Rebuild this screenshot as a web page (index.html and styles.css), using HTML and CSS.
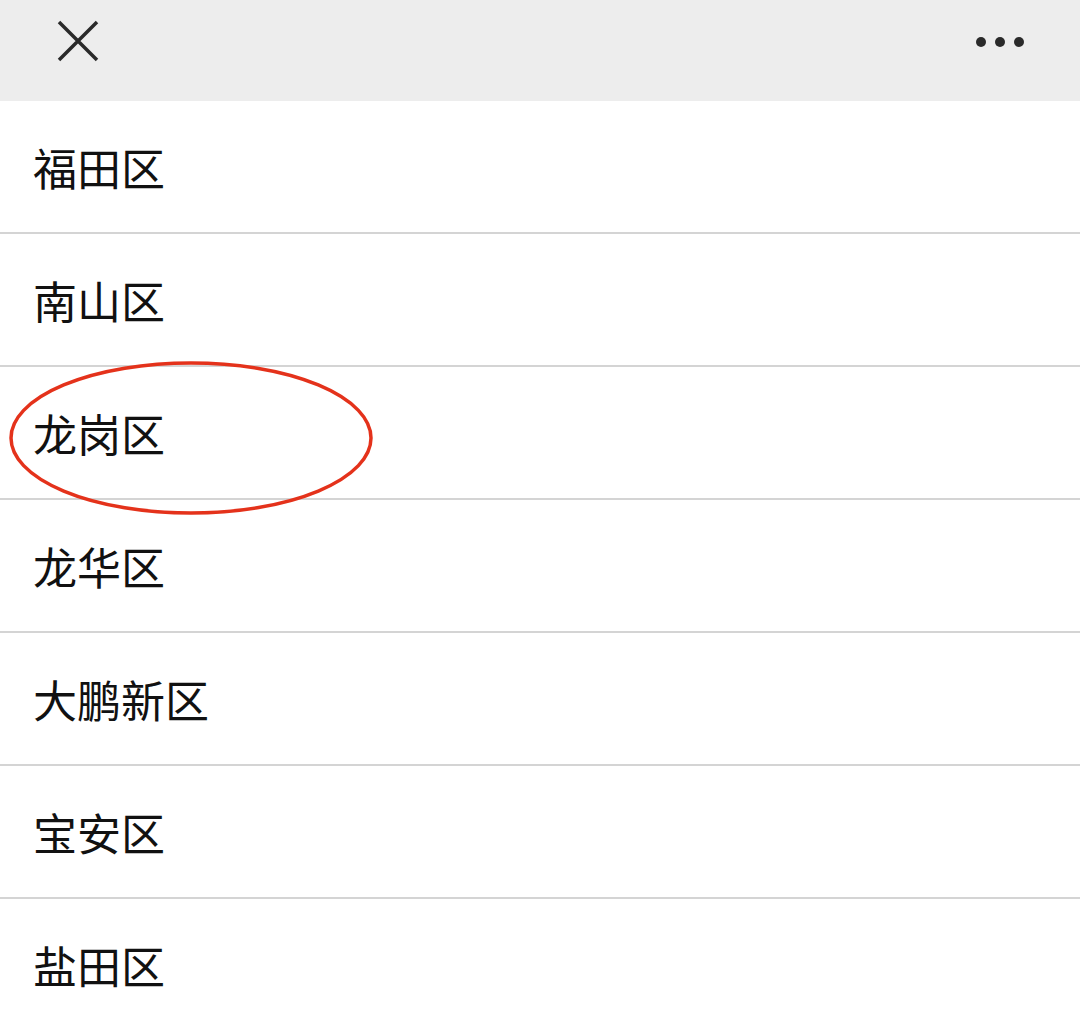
FILE: index.html
```html
<!DOCTYPE html>
<html lang="zh-CN">
<head>
  <meta charset="UTF-8" />
  <meta name="viewport" content="width=device-width, initial-scale=1.0" />
  <title>选择区域</title>
  <link rel="stylesheet" href="styles.css">
</head>
<body>
  <div class="topbar">
    <svg class="close-icon" width="42" height="42" viewBox="0 0 42 42">
      <path d="M2 2 L40 40 M40 2 L2 40" stroke="#2a2a2a" stroke-width="3.5" fill="none" />
    </svg>
    <svg class="more-icon" width="52" height="12" viewBox="0 0 52 12">
      <circle cx="6" cy="6" r="5" fill="#2a2a2a" />
      <circle cx="25" cy="6" r="5" fill="#2a2a2a" />
      <circle cx="44" cy="6" r="5" fill="#2a2a2a" />
    </svg>
  </div>

  <ul class="district-list">
    <li class="district">福田区</li>
    <li class="district">南山区</li>
    <li class="district marked">
      龙岗区
      <svg class="circle-mark" width="370" height="160" viewBox="0 0 370 160">
        <ellipse cx="182" cy="78" rx="180" ry="75" fill="none" stroke="#e4321b" stroke-width="3.5" />
      </svg>
    </li>
    <li class="district">龙华区</li>
    <li class="district">大鹏新区</li>
    <li class="district">宝安区</li>
    <li class="district">盐田区</li>
  </ul>
</body>
</html>
```

FILE: styles.css
```css
body {
  margin: 0;
  background-color: #fff;
  color: #111;
  font-family: "Noto Sans CJK SC", "Noto Sans", sans-serif;
}
.topbar {
  height: 101px;
  background-color: #ededed;
  display: flex;
  align-items: center;
  justify-content: space-between;
  padding: 0 53px 0 57px;
  box-sizing: border-box;
}
.close-icon {
  margin-top: -19px;
}
.more-icon {
  margin-top: -18px;
}
.district-list {
  list-style: none;
  margin: 0;
  padding: 0;
}
.district {
  height: 131px;
  border-bottom: 2px solid #d4d4d4;
  display: flex;
  align-items: center;
  padding-left: 33px;
  font-size: 44px;
  position: relative;
}
.district:last-child {
  border-bottom: none;
}
.circle-mark {
  position: absolute;
  left: 9px;
  top: -7px;
}
```
